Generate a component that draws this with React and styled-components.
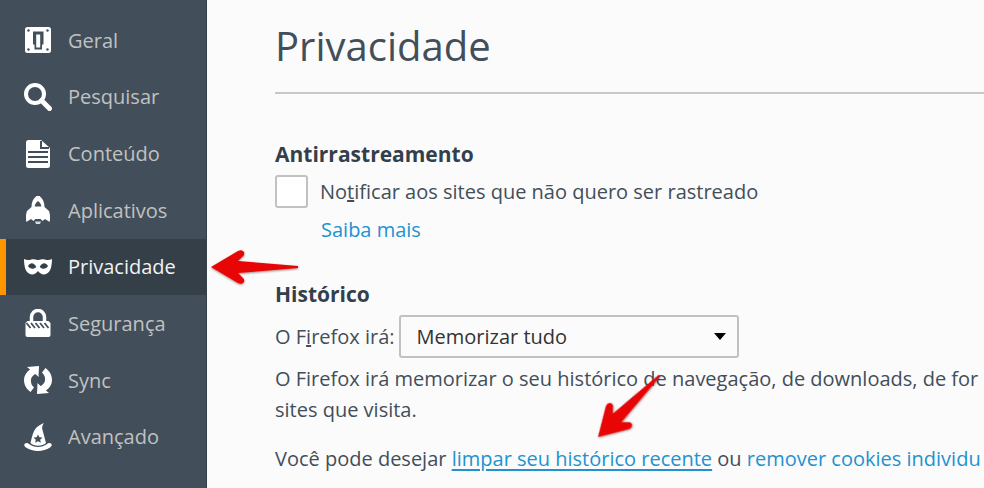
import React, { useState } from 'react';
import styled, { createGlobalStyle } from 'styled-components';

const GlobalStyle = createGlobalStyle`
    * {
        box-sizing: border-box;
    }
    body {
        margin: 0;
        background: #fbfbfb;
        color: #424e5a;
        font-family: "Open Sans", "Noto Sans", sans-serif;
        font-size: 20px;
        line-height: 31px;
    }
`;

const Page = styled.div`
    display: flex;
    min-height: 100vh;
    overflow: hidden;
`;

const Sidebar = styled.nav`
    flex: none;
    width: 207px;
    padding: 12px 0;
    background: #424f5a;
    border-right: 1px solid #343f48;
`;

const NavList = styled.div`
    display: grid;
    grid-auto-rows: 1fr;
    height: 453px;
`;

const NavItem = styled.button`
    position: relative;
    display: flex;
    align-items: center;
    gap: 16px;
    width: 100%;
    padding: 0 0 0 18px;
    border: none;
    border-left: 6px solid ${props => (props.$selected ? '#ff9500' : 'transparent')};
    background: ${props => (props.$selected ? '#343f48' : 'transparent')};
    color: ${props => (props.$selected ? '#f2f2f2' : '#c1c1c1')};
    font: inherit;
    cursor: pointer;
    svg {
        flex: none;
    }
`;

const Content = styled.main`
    flex: 1;
    min-width: 0;
    padding: 16px 0 0 68px;
    white-space: nowrap;
`;

const Title = styled.h1`
    margin: 0 0 45px;
    padding-bottom: 16px;
    border-bottom: 2px solid #c8c8c8;
    color: #424f5a;
    font-size: 40px;
    font-weight: 400;
    line-height: 60px;
`;

const Section = styled.section`
    margin-bottom: 34px;
`;

const Heading = styled.h2`
    margin: 0;
    color: #333f4b;
    font-size: 21px;
    font-weight: 700;
    line-height: 31px;
`;

const CheckRow = styled.label`
    display: flex;
    align-items: center;
    gap: 12px;
    margin-top: 5px;
`;

const Checkbox = styled.input`
    appearance: none;
    width: 33px;
    height: 33px;
    margin: 0;
    border: 2px solid #c1c1c1;
    border-radius: 3px;
    background: #fff;
    &:checked {
        background: #0095dd;
    }
`;

const MoreRow = styled.div`
    padding: 6px 0 0 46px;
`;

const Link = styled.a`
    color: #2292d0;
    text-decoration: ${props => (props.$active ? 'underline' : 'none')};
    text-decoration-thickness: 2px;
    text-underline-offset: 3px;
`;

const SelectRow = styled.div`
    display: flex;
    align-items: center;
    gap: 4px;
    margin: 5px 0;
`;

const SelectBox = styled.div`
    display: grid;
    align-items: center;
    width: 340px;
    select, svg {
        grid-area: 1 / 1;
    }
    svg {
        justify-self: end;
        margin-right: 13px;
        pointer-events: none;
    }
`;

const Select = styled.select`
    appearance: none;
    height: 43px;
    padding: 0 16px;
    border: 2px solid #c1c1c1;
    border-radius: 3px;
    background: #fbfbfb;
    color: #333;
    font: inherit;
`;

const Paragraph = styled.p`
    margin: 0 0 18px;
`;

const LinkWrap = styled.span`
    position: relative;
`;

const Pointer = styled.svg`
    position: absolute;
    overflow: visible;
    pointer-events: none;
    z-index: 1;
    filter: drop-shadow(0 1px 1px rgba(80, 0, 0, 0.5));
`;

const NavPointer = styled(Pointer)`
    left: calc(100% + 5px);
    top: 10px;
`;

const LinkPointer = styled(Pointer)`
    left: 146px;
    bottom: 17px;
    transform: rotate(-45deg);
    transform-origin: 0 50%;
`;

const arrowShape = 'M0 18 L27 2 Q31 0 33 3 Q34 6 31 8 L27 12 L87 17 V19 L27 24 L31 28 Q34 30 33 33 Q31 36 27 34 Z';

function Arrow({ as: Component }) {
    return (
        <Component width="88" height="36" viewBox="0 0 88 36" aria-hidden="true">
            <path d={arrowShape} fill="#e80505" />
        </Component>
    );
}

function Icon({ children }) {
    return (
        <svg width="28" height="28" viewBox="0 0 28 28" fill="#fff" aria-hidden="true">
            {children}
        </svg>
    );
}

const dark = '#424f5a';

const icons = {
    geral: (
        <Icon>
            <rect x="1" y="1" width="26" height="26" rx="2.5" />
            <g fill={dark}>
                <circle cx="4.5" cy="4.5" r="1.2" />
                <circle cx="23.5" cy="4.5" r="1.2" />
                <circle cx="4.5" cy="23.5" r="1.2" />
                <circle cx="23.5" cy="23.5" r="1.2" />
                <path d="M9 5.5h10.500v13h-1.500v5h-7.500v-5h-1.500z" />
            </g>
            <path d="M12.200 8.500h4v13h-4z" />
        </Icon>
    ),
    pesquisar: (
        <Icon>
            <circle cx="11" cy="11" r="9" fill="none" stroke="#fff" strokeWidth="4" />
            <path d="M17.5 17.5l8 8" stroke="#fff" strokeWidth="5" strokeLinecap="round" />
        </Icon>
    ),
    conteudo: (
        <Icon>
            <path d="M4 0h13l9 8v17.5a2.5 2.5 0 0 1-2.5 2.5h-19a2.5 2.5 0 0 1-2.5-2.5v-23a2.5 2.5 0 0 1 2.5-2.5z" />
            <path d="M17 1v7h8M4 12h20M4 17h20M4 22h20" fill="none" stroke={dark} strokeWidth="2" />
        </Icon>
    ),
    aplicativos: (
        <Icon>
            <path d="M14 -1c4.500 2.500 6.500 7 6.500 12l4.500 4c1.200 3 1.200 7 .7 11l-4.700-3-2.500 2-2-2h-5l-2 2-2.500-2-4.700 3c-.5-4-.5-8 .7-11l4.500-4c0-5 2-9.500 6.500-12z" />
            <path d="M14 5c2 1.500 3 3 3.300 5.500h-6.600c.3-2.500 1.300-4 3.300-5.500z" fill={dark} />
            <path d="M11 25.500h6l-1 2.500h-4zM13 28h2v1.500h-2z" opacity=".8" />
        </Icon>
    ),
    privacidade: (
        <Icon>
            <path d="M0 6c4 2 7 .2 10 .2 2 0 3 .8 4 .8s2-.8 4-.8c3 0 6 1.800 10-.2-.2 7-1 12-5 14.500-3.500 2-6.500.5-9-2.500-2.500 3-5.500 4.500-9 2.500-4-2.500-4.800-7.500-5-14.500z" />
            <path d="M4 13c2.500-4 6-3.500 8.300 1-3 3-6.500 2-8.300-1zM24 13c-2.500-4-6-3.500-8.300 1 3 3 6.500 2 8.300-1z" fill="#343f48" />
        </Icon>
    ),
    seguranca: (
        <Icon>
            <path d="M7.500 14V8a6.500 6.500 0 0 1 13 0V14" fill="none" stroke="#fff" strokeWidth="3.500" />
            <path d="M3.500 12h21l2 2v12a2 2 0 0 1-2 2h-21a2 2 0 0 1-2-2v-12z" />
            <path d="M2.500 14l4 5M7 14l4 5M11.500 14l4 5M16 14l4 5M20.500 14l4 5" stroke={dark} strokeWidth="1.800" />
        </Icon>
    ),
    sync: (
        <Icon>
            <path d="M3 1L15 0 14.500 11 11.500 8C8.500 9.500 6.500 12 7 16c.3 2.500 1.500 4 3 5.500L6.500 26C2.500 23 0 19 0 14 0 10 2 6.500 6 3.500z" />
            <path d="M25 27L13 28 13.500 17l3 3C19.500 18.500 21.500 16 21 12c-.3-2.500-1.500-4-3-5.500L21.500 2C25.500 5 28 9 28 14c0 4-2 7.500-6 10.500z" />
        </Icon>
    ),
    avancado: (
        <Icon>
            <path d="M6.500 20C8 14 9 8.500 12 5c2-2.500 5-3.500 8-5-1.500 2-2.500 4-1.500 7l3.500 13c-4 3.500-12 3.500-15.500 0z" />
            <path d="M1 20.500c1.500-1 3-.5 4 .5 5 4 13 4 18 0 1-1 2.500-1.500 4-.5 1.500 1.500.5 3-1 4-6.500 4.500-17.500 4.500-24 0-1.500-1-2.500-2.500-1-4z" />
            <path d="M14 11.500l1.400 2.700 3.100.4-2.300 2.100.6 3-2.800-1.400-2.800 1.400.6-3-2.300-2.100 3.100-.4z" fill={dark} />
        </Icon>
    ),
};

const panes = [
    { id: 'geral', label: 'Geral' },
    { id: 'pesquisar', label: 'Pesquisar' },
    { id: 'conteudo', label: 'Conteúdo' },
    { id: 'aplicativos', label: 'Aplicativos' },
    { id: 'privacidade', label: 'Privacidade' },
    { id: 'seguranca', label: 'Segurança' },
    { id: 'sync', label: 'Sync' },
    { id: 'avancado', label: 'Avançado' },
];

export default function App() {
    const [selected, setSelected] = useState('privacidade');
    const [doNotTrack, setDoNotTrack] = useState(false);

    return (
        <>
            <GlobalStyle />
            <Page>
                <Sidebar>
                    <NavList>
                        {
                            panes.map(pane => (
                                <NavItem
                                    key={pane.id}
                                    $selected={pane.id === selected}
                                    onClick={() => setSelected(pane.id)}
                                >
                                    {icons[pane.id]}
                                    <span>{pane.label}</span>
                                    {pane.id === 'privacidade' && <Arrow as={NavPointer} />}
                                </NavItem>
                            ))
                        }
                    </NavList>
                </Sidebar>
                <Content>
                    <Title>Privacidade</Title>
                    <Section>
                        <Heading>Antirrastreamento</Heading>
                        <CheckRow>
                            <Checkbox
                                type="checkbox"
                                checked={doNotTrack}
                                onChange={e => setDoNotTrack(e.target.checked)}
                            />
                            <span>No<u>t</u>ificar aos sites que não quero ser rastreado</span>
                        </CheckRow>
                        <MoreRow>
                            <Link href="#saiba-mais">Saiba mais</Link>
                        </MoreRow>
                    </Section>
                    <Section>
                        <Heading>Histórico</Heading>
                        <SelectRow>
                            <label htmlFor="history-mode">O F<u>i</u>refox irá:</label>
                            <SelectBox>
                                <Select id="history-mode" defaultValue="remember">
                                    <option value="remember">Memorizar tudo</option>
                                    <option value="never">Nunca memorizar</option>
                                    <option value="custom">Usar minhas configurações</option>
                                </Select>
                                <svg width="12" height="7" viewBox="0 0 12 7" aria-hidden="true">
                                    <path d="M0 0h12L6 7z" />
                                </svg>
                            </SelectBox>
                        </SelectRow>
                        <Paragraph>
                            O Firefox irá memorizar o seu histórico de navegação, de downloads, de for
                            <br />
                            sites que visita.
                        </Paragraph>
                        <Paragraph>
                            Você pode desejar{' '}
                            <LinkWrap>
                                <Link href="#limpar" $active>limpar seu histórico recente</Link>
                                <Arrow as={LinkPointer} />
                            </LinkWrap>
                            {' '}ou <Link href="#cookies">remover cookies individu</Link>
                        </Paragraph>
                    </Section>
                </Content>
            </Page>
        </>
    );
}
